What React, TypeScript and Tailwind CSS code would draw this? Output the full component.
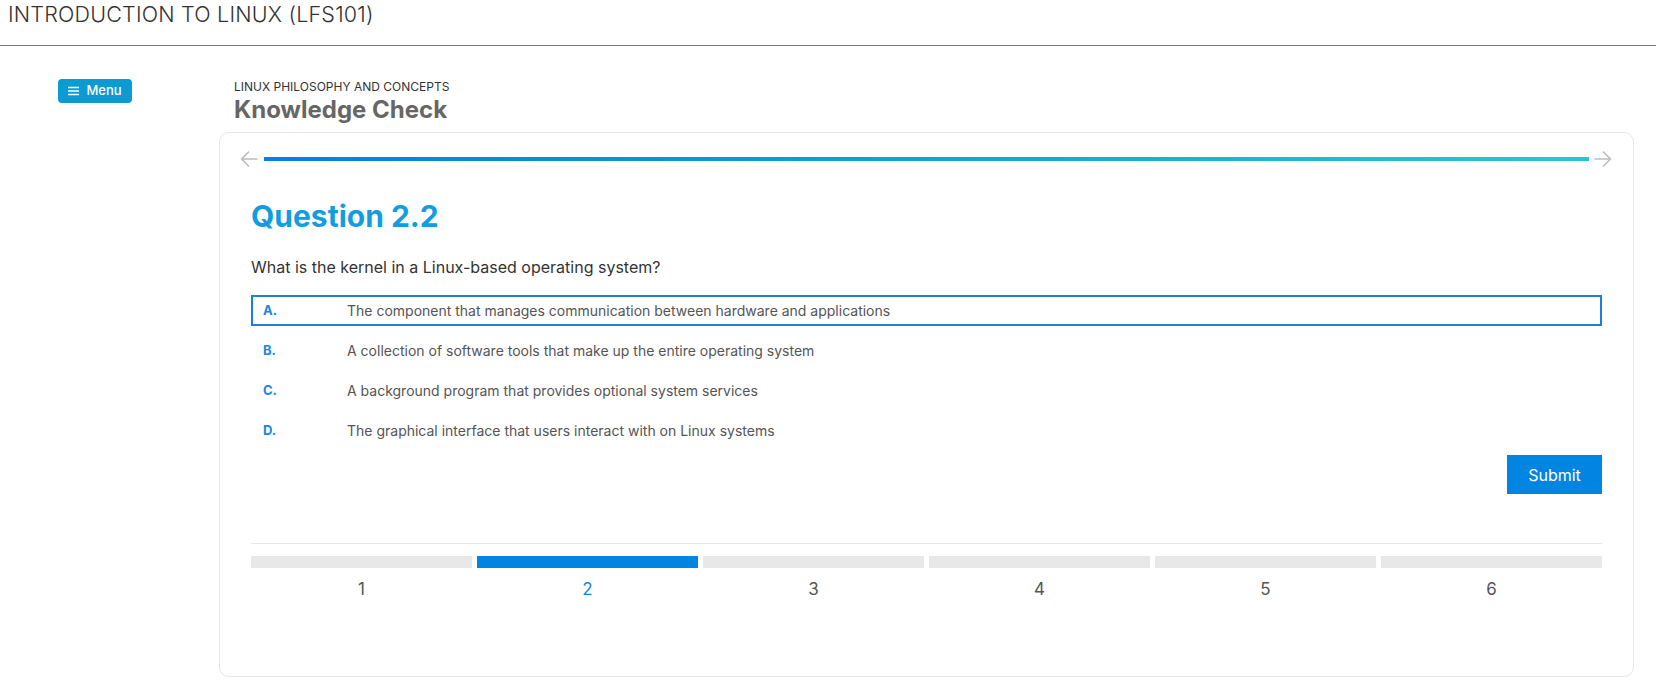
import React from "react";

const options = [
  { l: "A.", t: "The component that manages communication between hardware and applications", sel: true },
  { l: "B.", t: "A collection of software tools that make up the entire operating system" },
  { l: "C.", t: "A background program that provides optional system services" },
  { l: "D.", t: "The graphical interface that users interact with on Linux systems" },
];

function Arrow({ dir }: { dir: "left" | "right" }) {
  return (
    <svg width="18" height="16" viewBox="0 0 18 16" fill="none" stroke="#bdbdbd" strokeWidth="1.6" strokeLinecap="round" strokeLinejoin="round">
      {dir === "left" ? (
        <path d="M17 8H1.5M8.5 1L1.5 8L8.5 15" />
      ) : (
        <path d="M1 8H16.5M9.5 1L16.5 8L9.5 15" />
      )}
    </svg>
  );
}

export default function App() {
  return (
    <div className="min-h-screen bg-white font-['Inter','Noto_Sans',sans-serif] text-[#333]">
      <header className="h-[46px] border-b border-[#777] pl-[8px] pt-[1px] text-[21.5px] font-light leading-[27px] tracking-[0.2px] text-[#333]">
        INTRODUCTION TO LINUX (LFS101)
      </header>
      <div className="flex">
        <div className="w-[219px] shrink-0 pl-[58px] pt-[33px]">
          <button className="flex h-[24px] w-[74px] items-center justify-center gap-[7px] rounded-[4px] bg-[#0a9bd3] text-[13px] font-medium text-white">
            <svg width="11" height="10" viewBox="0 0 11 10" fill="none" stroke="white" strokeWidth="1.4">
              <path d="M0 1.5H11M0 5H11M0 8.5H11" />
            </svg>
            Menu
          </button>
        </div>
        <main className="w-[1415px] shrink-0 pt-[33px]">
          <div className="pl-[15px]">
            <div className="text-[12px] leading-[16px] text-[#333]">LINUX PHILOSOPHY AND CONCEPTS</div>
            <h1 className="text-[24px] font-bold leading-[29px] text-[#666]">Knowledge Check</h1>
          </div>
          <section className="mt-[8px] h-[545px] rounded-[10px] border border-[#e6e6e6]">
            <div className="flex items-center pl-[20px] pr-[21px] pt-[18px]">
              <Arrow dir="left" />
              <div className="ml-[6px] mr-[5px] h-[4px] flex-1 bg-gradient-to-r from-[#0a7de2] to-[#2ac8cc]" />
              <Arrow dir="right" />
            </div>
            <div className="px-[31px]">
              <h2 className="mt-[31px] text-[30px] font-bold leading-[36px] text-[#129de2]">Question 2.2</h2>
              <p className="mt-[21px] text-[16px] leading-[24px] text-[#333]">What is the kernel in a Linux-based operating system?</p>
              <div className="mt-[16px] flex flex-col gap-[9px]">
                {options.map((o) => (
                  <div
                    key={o.l}
                    className={
                      o.sel
                        ? "flex h-[31px] items-center border-2 border-[#1a80e0] pl-[10px]"
                        : "flex h-[31px] items-center border-2 border-transparent pl-[10px]"
                    }
                  >
                    <span className="w-[84px] shrink-0 text-[13px] font-bold text-[#1a86e0]">{o.l}</span>
                    <span className="text-[14px] text-[#555]">{o.t}</span>
                  </div>
                ))}
              </div>
              <div className="mt-[9px] flex justify-end">
                <button className="h-[39px] w-[95px] bg-[#0085e2] text-[16px] text-white">Submit</button>
              </div>
              <div className="mt-[49px] h-px bg-[#e6e6e6]" />
              <div className="mt-[12px] flex gap-[5px]">
                {[1, 2, 3, 4, 5, 6].map((n) => (
                  <div key={n} className="flex flex-1 flex-col items-center">
                    <div className={n === 2 ? "h-[12px] w-full bg-[#0085e2]" : "h-[12px] w-full bg-[#e8e8e8]"} />
                    <div className={n === 2 ? "mt-[9px] text-[17px] leading-[24px] text-[#1a86e0]" : "mt-[9px] text-[17px] leading-[24px] text-[#555]"}>
                      {n}
                    </div>
                  </div>
                ))}
              </div>
            </div>
          </section>
        </main>
      </div>
    </div>
  );
}
